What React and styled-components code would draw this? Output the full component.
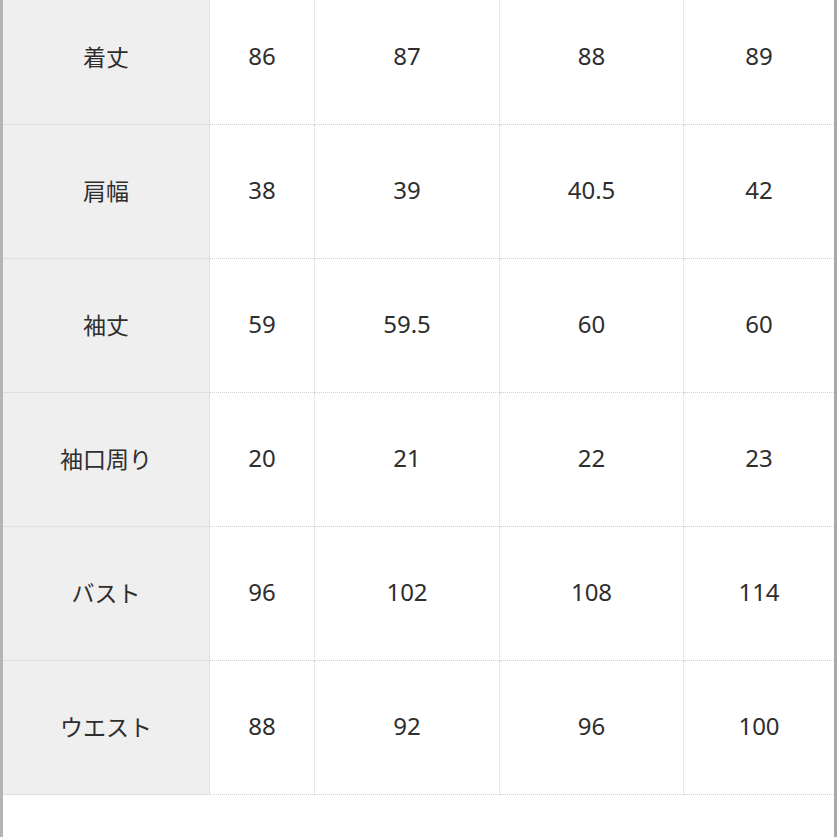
import React from "react";
import styled, { createGlobalStyle } from "styled-components";

const Global = createGlobalStyle`
  html, body { margin: 0; padding: 0; background: #fff; overflow: hidden; }
  body { font-family: "Noto Sans CJK JP", "Noto Sans", sans-serif; }
`;

const Frame = styled.div`
  width: 837px;
  height: 846px;
  margin-top: -9px;
  box-sizing: border-box;
  border-left: 3px solid #b4b4b4;
  border-right: 3px solid #a8a8a8;
  background: #fff;
`;

const Grid = styled.div`
  display: grid;
  grid-template-columns: 207px 105px 185px 184px 150px;
`;

const Cell = styled.div`
  height: 134px;
  box-sizing: border-box;
  display: flex;
  align-items: center;
  justify-content: center;
  padding-bottom: 4px;
  border-bottom: 1px dotted #d2d2d2;
  border-right: ${(p) => (p.$last ? "none" : "1px dotted #d2d2d2")};
  background: ${(p) => (p.$label ? "#efefef" : "#fff")};
  color: #2e2e2e;
  font-size: ${(p) => (p.$label ? "23px" : "24px")};
  font-family: ${(p) =>
    p.$label
      ? '"Noto Sans CJK JP", sans-serif'
      : '"Noto Sans", "Noto Sans CJK JP", sans-serif'};
`;

const rows = [
  ["着丈", "86", "87", "88", "89"],
  ["肩幅", "38", "39", "40.5", "42"],
  ["袖丈", "59", "59.5", "60", "60"],
  ["袖口周り", "20", "21", "22", "23"],
  ["バスト", "96", "102", "108", "114"],
  ["ウエスト", "88", "92", "96", "100"],
];

export default function App() {
  return (
    <>
      <Global />
      <Frame>
        <Grid>
          {rows.map((r, i) =>
            r.map((v, j) => (
              <Cell key={`${i}-${j}`} $label={j === 0} $last={j === r.length - 1}>
                {v}
              </Cell>
            ))
          )}
        </Grid>
      </Frame>
    </>
  );
}
